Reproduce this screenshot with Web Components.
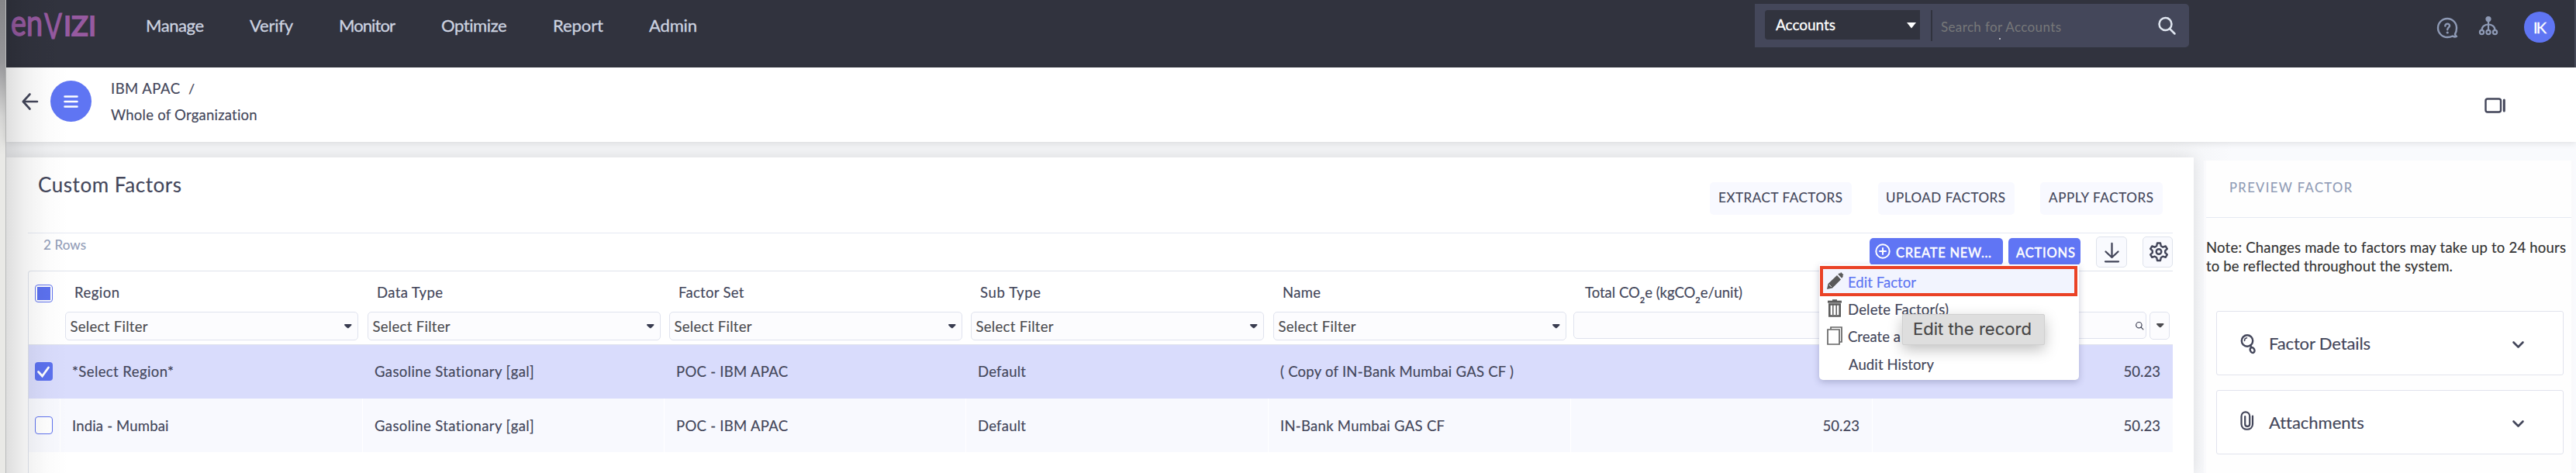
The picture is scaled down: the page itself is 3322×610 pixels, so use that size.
<!DOCTYPE html>
<html lang="en">
<head>
<meta charset="utf-8">
<title>Custom Factors</title>
<style>
html,body{margin:0;height:610px;overflow:hidden;background:#f3f4f6;font-family:Lato,"Open Sans",sans-serif;color:#43465a}
</style>
</head>
<body>
<app-shell></app-shell>
<script>
const def = (name, html, init) => customElements.define(name, class extends HTMLElement {
  connectedCallback() {
    if (this.shadowRoot) return;
    const root = this.attachShadow({ mode: 'open' });
    root.innerHTML = typeof html === 'function' ? html(this) : html;
    if (init) init(this, root);
  }
});

/* Text run tracked to a given width: w = width, s = font size */
def('ui-text', el => `<style>
:host{display:block;flex:none;white-space:nowrap;height:24px;line-height:26px;width:${el.getAttribute('w')}px;font-size:${el.getAttribute('s') || 18}px;-webkit-text-stroke:var(--heft,.15px)}
span{display:inline-block}</style><span><slot></slot></span>`, (el, root) => {
  const n = el.textContent.length, w = +el.getAttribute('w');
  const nat = root.querySelector('span').getBoundingClientRect().width;
  el.style.letterSpacing = ((w - nat) / Math.max(1, n - 1)).toFixed(3) + 'px';
});

const S = 'fill="none" stroke="currentColor" stroke-linecap="round" stroke-linejoin="round"';
const ICONS = {
  back: `<g ${S} stroke-width="2.6"><path d="M20 11H2M10.500 1.500L1.800 11l8.700 9.500"/></g>`,
  menu: `<g ${S} stroke-width="2.5"><path d="M1.500 1.500h16M1.500 8h16M1.500 14.500h16"/></g>`,
  search: `<g ${S} stroke-width="2.500"><circle cx="9.500" cy="9" r="8"/><path d="M15 15l6.500 6.500"/></g>`,
  help: `<g ${S} stroke-width="2.400"><path d="M23 21c2-3 2-5 2-8A12 12 0 1 0 13 25c3 0 5-.5 7-1.500 1.200.8 3.500 1.200 5 .5-1.500-.7-1.800-1.700-2-3z"/><path d="M10.300 10.500c0-4 5.900-3.700 5.700-.2-.1 2-2.800 2.300-2.800 5"/></g><circle cx="13.200" cy="19" r="1.600" fill="currentColor"/>`,
  tree: `<g fill="none" stroke="currentColor" stroke-width="2.200"><circle cx="3.500" cy="20.500" r="2.600"/><circle cx="12" cy="20.500" r="2.600"/><circle cx="20.500" cy="20.500" r="2.600"/><path d="M12 5v13M3.500 18c0-10 17-10 17 0"/></g><circle cx="12" cy="3.600" r="3.600" fill="currentColor"/>`,
  panel: `<g ${S} stroke-width="2.400"><rect x="1.500" y="1.500" width="19.500" height="17" rx="2.500"/><path d="M25.300 3v14" stroke-width="3"/></g>`,
  plus: `<g ${S} stroke-width="2"><circle cx="10" cy="10" r="8.700"/><path d="M10 6v8M6 10h8"/></g>`,
  download: `<g ${S} stroke-width="2.300"><path d="M10.500 2v17M2.500 12.500l8 7.500 8-7.500M2 25.300h17"/></g>`,
  gear: `<g ${S} stroke-width="2.400"><circle cx="12" cy="12.500" r="3.300"/><path d="M10 1.500h4l.8 3.700 2.500 1.500 3.400-1.200 2.100 3.400-2.600 2.500v2.500l2.600 2.500-2.100 3.500-3.500-1.200-2.400 1.500-.8 3.800h-4l-.8-3.800-2.400-1.500-3.500 1.200-2.100-3.500 2.600-2.500v-2.500L1.200 8.900l2.100-3.400 3.400 1.200 2.500-1.500z"/></g>`,
  caret: `<path d="M0 .7Q0 0 1 0h7.500q1 0 1 .7 0 .9-1.500 2L6 4.700q-1.200 1-2.400 0L1.400 2.700Q0 1.600 0 .7z" fill="currentColor"/>`,
  tri: `<path d="M0 0h12L6 7.500z" fill="currentColor"/>`,
  check: `<path d="M4.500 12.500l5 5.500 8-11" fill="none" stroke="#fff" stroke-width="2.800" stroke-linecap="round"/>`,
  pencil: `<path d="M0 22l1.500-7L13 4l5 5.500L7 20.500zM14.300 2.800L16 1.200l1.200.5L18 0l3.500 3.500-1.200 1 .5 1.300-1.700 2z" fill="#595959"/><path d="M2.800 16l3 3" stroke="#fff" stroke-width="1"/>`,
  trash: `<g fill="none" stroke="#5c5c5c"><path d="M0 3.200h18" stroke-width="3"/><path d="M6 1.200h6" stroke-width="2"/><path d="M2.300 6.500h13.400v15H2.300z" stroke-width="2.600"/><path d="M6.800 7v13M11.200 7v13" stroke-width="1.500"/></g>`,
  copy: `<g fill="#fff" stroke="#666" stroke-width="1.700"><path d="M5 3.500V1h14v19h-2.500" /><path d="M1 4h15v19H1z"/></g>`,
  details: `<g ${S} stroke-width="2.400"><circle cx="9" cy="8.500" r="7.200"/><path d="M5.500 8.500c0-2 1.200-3.500 3-3.700" stroke-width="1.600"/><path d="M13 14.500l1.500 2.500"/><ellipse cx="15.600" cy="20.500" rx="2.700" ry="3.600" transform="rotate(-28 15.600 20.500)"/></g>`,
  clip: `<path ${S} stroke-width="2.200" d="M16 6.500V17c0 9-14.500 9-14.500 0V7c0-7.500 10.700-7.500 10.700 0v10c0 3.800-6 3.800-6 0V7"/>`,
  chev: `<path ${S} stroke-width="2.600" d="M1.500 1.500L7.500 7.500l6-6"/>`
};
def('ui-icon', el => `<style>:host{display:block;flex:none;line-height:0}svg{overflow:visible;display:block}</style>
<svg width="${el.getAttribute('w')}" height="${el.getAttribute('h')}" viewBox="0 0 ${el.getAttribute('w')} ${el.getAttribute('h')}">${ICONS[el.getAttribute('name')]}</svg>`);

def('brand-logo', `<style>:host{display:block;flex:none;width:120px;height:64px}</style>
<svg width="120" height="64" viewBox="8 0 120 64" fill="#965aa0" stroke="#965aa0" font-family="Lato,sans-serif">
<text x="14" y="46" font-size="46" stroke-width="1.400" textLength="41" lengthAdjust="spacingAndGlyphs">en</text>
<text x="57" y="50" font-size="46" stroke-width="1" textLength="23" lengthAdjust="spacingAndGlyphs">V</text>
<text x="82" y="46" font-size="35" stroke-width="1.800" textLength="42" lengthAdjust="spacingAndGlyphs">IZI</text></svg>`);

def('top-bar', `<style>
:host{display:flex;align-items:flex-start;height:87px;background:#31333e;color:#cdd3e0;border-right:2px solid #464957;box-sizing:border-box}
:host > ui-text,ui-text{--heft:.3px}
.search{display:flex;align-items:flex-start;box-sizing:border-box;width:560px;height:56px;margin:5px 0 0 1364px;padding:8px 0 0 13px;background:#44475a;border-radius:0 5px 5px 0}
.sel{display:flex;box-sizing:border-box;width:200px;height:38px;background:#31333e;border-radius:4px 0 0 4px;color:#fff}
.bar{width:2px;height:40px;margin-left:14px;background:#31333e}
.ph{color:#777879;position:relative}
.ph i{position:absolute;left:86px;top:36px;width:2px;height:2px;background:#b5b7c0}
.av{width:40px;height:40px;border-radius:50%;background:#5f75f3;margin:15px 0 0 34px;color:#fff}
</style>
<brand-logo></brand-logo>
<ui-text w="75" s="22" style="margin:20px 0 0 60px">Manage</ui-text>
<ui-text w="56" s="22" style="margin:20px 0 0 59px">Verify</ui-text>
<ui-text w="73" s="22" style="margin:20px 0 0 59px">Monitor</ui-text>
<ui-text w="85" s="22" style="margin:20px 0 0 59px">Optimize</ui-text>
<ui-text w="65" s="22" style="margin:20px 0 0 59px">Report</ui-text>
<ui-text w="62" s="22" style="margin:20px 0 0 59px">Admin</ui-text>
<div class="search">
<div class="sel"><ui-text w="77" s="19" style="margin:6px 0 0 14px">Accounts</ui-text><ui-icon name="tri" w="12" h="8" style="margin:16px 0 0 92px"></ui-icon></div>
<div class="bar"></div>
<div class="ph"><ui-text w="155" s="17" style="margin:9px 0 0 11px;--heft:0">Search for Accounts</ui-text><i></i></div>
<ui-icon name="search" w="23" h="23" style="margin:9px 0 0 125px;color:#e0e6f0"></ui-icon>
</div>
<ui-icon name="help" w="26" h="26" style="margin:23px 0 0 320px;color:#8e9ab5"></ui-icon>
<ui-icon name="tree" w="24" h="24" style="margin:21px 0 0 28px;color:#8e9ab5"></ui-icon>
<div class="av"><ui-text w="17" s="20" style="margin:7px 0 0 12px">IK</ui-text></div>`);

def('page-bar', `<style>
:host{display:flex;align-items:flex-start;height:96px;background:#fff;box-shadow:0 2px 8px rgba(0,0,0,.1);position:relative}
.c{width:53px;height:53px;border-radius:50%;background:#5f75f3;margin:17px 0 0 16px;color:#fff}
.t{margin:14px 0 0 25px}.r{display:flex}
</style>
<ui-icon name="back" w="21" h="22" style="margin:33px 0 0 20px"></ui-icon>
<div class="c"><ui-icon name="menu" w="19" h="16" style="margin:19px 0 0 17px"></ui-icon></div>
<div class="t"><div class="r"><ui-text w="89" s="18.500">IBM APAC</ui-text><ui-text w="6" s="18" style="margin-left:11px">/</ui-text></div>
<ui-text w="189" s="18.500" style="margin-top:10px">Whole of Organization</ui-text></div>
<ui-icon name="panel" w="28" h="20" style="margin:39px 0 0 2872px"></ui-icon>`);

def('ui-button', el => `<style>
:host{display:flex;flex:none;box-sizing:border-box;height:42px;border-radius:5px;background:#f8f9ff}
:host([primary]){height:35px;background:#6075f4;color:#fff;--heft:.5px}
:host([tool]){width:40px;height:40px;background:#f9fafe;border:1px solid #dfe3ec}
</style><slot></slot>`);

def('ui-check', el => `<style>:host{display:block;box-sizing:border-box;width:23px;height:23px;border:1.500px solid #5f72ee;border-radius:4px;background:#fff;margin-left:8px}
:host([mixed]){padding:2px}:host([mixed]) i{display:block;height:100%;background:#5c71ee}
:host([on]){background:#5c71ee;height:24px;border:0}</style><i></i>${el.hasAttribute('on') ? '<ui-icon name="check" w="23" h="24"></ui-icon>' : ''}`);

def('filter-field', el => `<style>:host{display:flex;box-sizing:border-box;height:37px;border:1px solid #e0e3ee;border-radius:5px;background:#fcfcfe;margin-left:7px;width:378px;justify-content:space-between;color:#4c4c50}
ui-icon{color:#393c50}</style>
${el.hasAttribute('plain') ? '' : '<ui-text w="100" s="18.500" style="margin:5px 0 0 5.500px">Select Filter</ui-text><ui-icon name="caret" w="10" h="6" style="margin:15px 7px 0 0"></ui-icon>'}<slot></slot>`);

const head = (w, t, f = '<filter-field></filter-field>') => `<div class="h"><ui-text w="${w}" s="18.500" style="margin:14px 0 14px 19px">${t}</ui-text>${f}</div>`;
const cell = (w, t) => `<div class="d"><ui-text w="${w}" s="18.500">${t}</ui-text></div>`;
const num = t => `<div class="d n"><ui-text w="47.500" s="18.500">${t}</ui-text></div>`;
def('factor-grid', `<style>
:host{display:block;flex:1;box-sizing:border-box;width:2766px;margin-left:28px;border:solid #dfe3ec;border-width:1px 0 0 1px;border-top-left-radius:4px}
.g{display:grid;grid-template-columns:40px 390px 389px 389px 390px 390px 389px 388px}
.head{height:95px;box-sizing:border-box;border-bottom:1px solid #dfe3ec}
.d{box-sizing:border-box;height:69px;border-left:1px solid transparent;padding:21px 0 0 15px}
.n{display:flex;justify-content:flex-end;padding-right:16px}
.on{background:#d9dcfc}.off{background:#f8f9fe}.off .d{border-color:#fff;padding-top:22px}
.last{display:flex}
sub{font-size:11px;font-weight:700;line-height:0;vertical-align:-7px}
</style>
<div class="g head"><div><ui-check mixed style="margin-top:17px"></ui-check></div>
${head(58, 'Region')}${head(85, 'Data Type')}${head(84.5, 'Factor Set')}${head(78, 'Sub Type')}${head(49, 'Name')}
${head(203, 'Total CO<sub>2</sub>e (kgCO<sub>2</sub>e/unit)', '<filter-field plain style="margin-left:4px;height:35px"></filter-field>')}
<div class="h"><div class="last" style="margin-top:52px"><filter-field plain style="margin-left:5px;width:349px;height:35px;justify-content:flex-end"><ui-icon name="search" w="23" h="23" style="zoom:.46;margin:26px 6px 0 0;color:#393c50"></ui-icon></filter-field>
<filter-field plain style="margin-left:4px;width:26px;height:36px"><ui-icon name="caret" w="10" h="6" style="margin:14px 0 0 8px"></ui-icon></filter-field></div></div></div>
<div class="g on"><div><ui-check on style="margin-top:22px"></ui-check></div>${cell(131, '*Select Region*')}${cell(206, 'Gasoline Stationary [gal]')}${cell(144, 'POC - IBM APAC')}${cell(62, 'Default')}${cell(301, '( Copy of IN-Bank Mumbai GAS CF )')}<div class="d"></div>${num('50.23')}</div>
<div class="g off"><div><ui-check style="margin-top:23px"></ui-check></div>${cell(124.5, 'India - Mumbai')}${cell(206, 'Gasoline Stationary [gal]')}${cell(144, 'POC - IBM APAC')}${cell(62, 'Default')}${cell(212, 'IN-Bank Mumbai GAS CF')}${num('50.23')}${num('50.23')}</div>`);

def('action-menu', `<style>
:host{position:absolute;left:2338px;top:138px;width:335px;height:149px;box-sizing:border-box;background:#fff;border-radius:0 0 5px 5px;box-shadow:0 3px 8px rgba(60,65,110,.28);padding:2px 0 0 1px}
.i{display:flex;height:35px}
.e{box-sizing:border-box;width:332px;height:39px;border:4px solid #ea4226;background:#f2f4fe;color:#5c73f2}
.tip{position:absolute;left:107px;top:64px;width:184px;height:40px;box-sizing:border-box;background:#dedede;border:1px solid #d0d0d0;border-radius:2px;box-shadow:0 6px 18px rgba(0,0,0,.25);color:#464646;font-family:Inter,sans-serif}
</style>
<div class="i e"><ui-icon name="pencil" w="22" h="22" style="margin:4px 0 0 5px"></ui-icon><ui-text w="88" s="18.500" style="margin:4px 0 0 5px">Edit Factor</ui-text></div>
<div class="i"><ui-icon name="trash" w="18" h="23" style="margin:4px 0 0 10px"></ui-icon><ui-text w="130" s="18.500" style="margin:4px 0 0 8px">Delete Factor(s)</ui-text></div>
<div class="i"><ui-icon name="copy" w="20" h="24" style="margin:4px 0 0 9px"></ui-icon><ui-text w="68" s="18.500" style="margin:4px 0 0 7px">Create a</ui-text></div>
<div class="i"><ui-text w="110" s="18.500" style="margin:5px 0 0 37px">Audit History</ui-text></div>
<div class="tip"><ui-text w="153" s="22" style="margin:5px 0 0 13px">Edit the record</ui-text></div>`);

def('factor-card', `<style>
:host{display:flex;flex-direction:column;position:relative;width:2821px;height:407px;margin-top:20px;background:#fff;box-shadow:0 0 18px rgba(0,0,0,.1)}
.top{display:flex;box-sizing:border-box;height:97px;margin-left:28px;width:2766px;border-radius:0}
.tools{display:flex;box-sizing:border-box;height:49px;width:2766px;margin-left:28px;border-top:1px solid #e5e9f3;color:#43465a}
</style>
<div class="top"><ui-text w="185" s="26" style="margin:22px 0 0 13px">Custom Factors</ui-text>
<ui-button style="width:183px;margin:32px 0 0 1971px"><ui-text w="160" s="17" style="margin:7px 0 0 11px">EXTRACT FACTORS</ui-text></ui-button>
<ui-button style="width:176px;margin:32px 0 0 34px"><ui-text w="154" s="17" style="margin:7px 0 0 10px">UPLOAD FACTORS</ui-text></ui-button>
<ui-button style="width:158px;margin:32px 0 0 33px"><ui-text w="135" s="17" style="margin:7px 0 0 11px">APPLY FACTORS</ui-text></ui-button></div>
<div class="tools"><ui-text w="55" s="17" style="margin:2px 0 0 20px;color:#929db8">2 Rows</ui-text>
<ui-button primary style="width:172px;margin:6px 0 0 2300px"><ui-icon name="plus" w="20" h="20" style="margin:7px 0 0 7px"></ui-icon><ui-text w="123" s="16.500" style="margin:6px 0 0 7px">CREATE NEW...</ui-text></ui-button>
<ui-button primary style="width:93px;margin:6px 0 0 7px"><ui-text w="76" s="16.500" style="margin:6px 0 0 10px">ACTIONS</ui-text></ui-button>
<ui-button tool style="margin:4px 0 0 20px"><ui-icon name="download" w="21" h="27" style="margin:6px 0 0 9px"></ui-icon></ui-button>
<ui-button tool style="margin:4px 0 0 20px;width:39px"><ui-icon name="gear" w="24" h="25" style="margin:6px 0 0 7.500px"></ui-icon></ui-button></div>
<factor-grid></factor-grid><action-menu></action-menu>`);

def('accordion-item', el => `<style>
:host{display:flex;box-sizing:border-box;width:448px;height:83px;margin:0 0 19px 16px;border:1px solid #e1e3ed;border-radius:3px;background:#fff}
</style><ui-icon name="${el.getAttribute('icon')}" w="20" h="25" style="margin:${el.getAttribute('icon') === 'clip' ? 26 : 29}px 17px 0 30px"></ui-icon><slot></slot>
<ui-icon name="chev" w="15" h="9" style="margin:38px 50px 0 auto"></ui-icon>`);

def('preview-panel', `<style>
:host{display:block;position:relative;width:477px;height:403px;margin:24px 0 0 13px;background:#fefefe;border-left:3px solid #fafafc;box-sizing:border-box;border-right:3px solid #f9f9fb}
.t{height:74px;box-sizing:border-box;border-bottom:1px solid #e6eaf3;padding:22px 0 0 30px;color:#8f9bb5}
.n{color:#333;padding-top:25px;height:120px;box-sizing:border-box}
accordion-item{margin-left:13px}
</style>
<div class="t"><ui-text w="158" s="16.500">PREVIEW FACTOR</ui-text></div>
<div class="n"><ui-text w="464" s="18.500">Note: Changes made to factors may take up to 24 hours</ui-text><ui-text w="318" s="18.500">to be reflected throughout the system.</ui-text></div>
<accordion-item icon="details"><ui-text w="131" s="22" style="margin:28px 0 0">Factor Details</ui-text></accordion-item>
<accordion-item icon="clip"><ui-text w="122" s="22" style="margin:28px 0 0">Attachments</ui-text></accordion-item>`);

def('app-shell', `<style>
:host{display:grid;grid-template-columns:8px 3314px;width:3322px;height:610px;position:relative}
.edge{box-sizing:border-box;border-right:1px solid #b9babb;background:linear-gradient(#858588,#97979a 80px,#d5d5d4 150px,#e9e9e6 200px)}
.app{min-width:0;background:linear-gradient(90deg,#f3f4f6 2790px,#f9fafd 2870px)}
.row{display:flex;align-items:flex-start;height:427px;overflow:hidden}
.shade{position:absolute;left:8px;top:0;width:80px;height:610px;background:linear-gradient(90deg,rgba(0,0,0,.13),rgba(0,0,0,.06) 30%,rgba(0,0,0,.015) 65%,transparent);pointer-events:none}
</style>
<div class="edge"></div>
<div class="app"><top-bar></top-bar><page-bar></page-bar><div class="row"><factor-card></factor-card><preview-panel></preview-panel></div></div>
<div class="shade"></div>`);
</script>
</body>
</html>
